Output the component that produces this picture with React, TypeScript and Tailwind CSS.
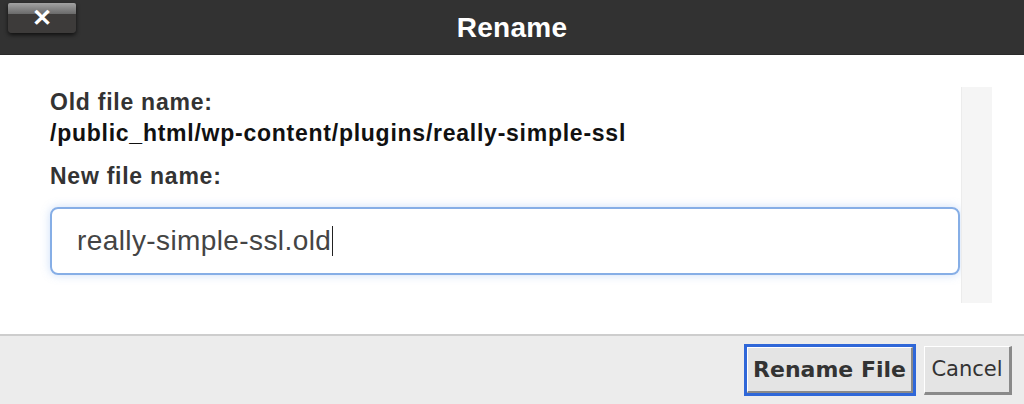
export default function App() {
  return (
    <div className="w-[1024px] h-[404px] flex flex-col bg-white overflow-hidden font-['Liberation_Sans',Arial,sans-serif]">
      {/* Title bar */}
      <div className="h-[55px] shrink-0 bg-[#323232] border-b border-[#2a2a2a] flex items-start relative">
        <button className="absolute left-[8px] top-[3px] w-[68px] h-[30px] rounded-b-[4px] rounded-t-[2px] overflow-hidden flex flex-col shadow-[0_2px_4px_rgba(0,0,0,0.7)]">
          <span className="h-[11px] bg-gradient-to-b from-[#a3a3a3] to-[#6a6a6a]" />
          <span className="flex-1 bg-[#3d3b3a]" />
          <span className="absolute inset-0 flex items-center justify-center text-white text-[24px] font-bold leading-none">
            ✕
          </span>
        </button>
        <h1 className="w-full text-center text-white font-bold text-[28px] leading-[55px] tracking-[0.3px]">Rename</h1>
      </div>

      {/* Body */}
      <div className="flex-1 flex pl-[50px] pr-[32px] pt-[32px]">
        <div className="flex-1 flex flex-col">
          <div className="text-[23px] font-bold text-[#333] leading-[30px] tracking-[0.75px]">Old file name:</div>
          <div className="text-[23px] font-bold text-[#111] leading-[30px] tracking-[0.75px] mt-[1px]">
            /public_html/wp-content/plugins/really-simple-ssl
          </div>
          <div className="text-[23px] font-bold text-[#333] leading-[30px] mt-[13px] tracking-[0.75px]">New file name:</div>
          <div className="mt-[16px] h-[68px] rounded-[8px] border-2 border-[#86aee6] shadow-[0_0_10px_rgba(110,160,235,0.35)] flex items-center pl-[25px]">
            <span className="text-[28px] text-[#444] tracking-[0.4px]">really-simple-ssl.old</span>
            <span className="w-px h-[30px] bg-[#222] ml-[1px]" />
          </div>
        </div>
        <div className="w-[31px] ml-[1px] mb-[31px] bg-[#f5f5f5] border-l border-[#ececec]" />
      </div>

      {/* Footer */}
      <div className="h-[70px] shrink-0 bg-[#ececec] border-t-2 border-[#cdcdcd] flex items-center justify-end gap-[8px] pr-[12px] font-['DejaVu_Sans',Verdana,sans-serif]">
        <button className="w-[172px] h-[52px] border-[3px] border-[#2f67d8] bg-[#e4e4e4]">
          <span className="h-full flex items-center justify-center border-t border-l border-white border-b-2 border-r-2 border-b-[#8a8a8a] border-r-[#8a8a8a] text-[22px] font-bold text-[#333]">
            Rename File
          </span>
        </button>
        <button className="w-[88px] h-[49px] bg-[#e4e4e4] border-t border-l border-white border-b-[3px] border-r-[3px] border-b-[#8a8a8a] border-r-[#8a8a8a] text-[21px] text-[#333] mt-[1px]">
          Cancel
        </button>
      </div>
    </div>
  );
}
